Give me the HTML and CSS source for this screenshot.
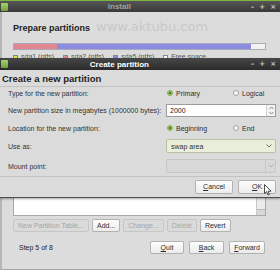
FILE: index.html
```html
<!DOCTYPE html>
<html lang="en">

<head>
  <meta charset="UTF-8" />
  <title>Install</title>
  <link rel="stylesheet" href="styles.css">
</head>

<body>
  <!-- 后面的安装窗口 -->
  <div class="win">
    <div class="titlebar main">
      <span class="logo"></span>
      <span class="title">Install</span>
      <span class="ctrls"><b>–</b><b>+</b><b>×</b></span>
    </div>
    <div class="win-body">
      <div class="head">
        <h1>Prepare partitions</h1>
        <span class="mark">www.aktubu.com</span>
      </div>
      <div class="bar">
        <span class="p-red" style="width:43px"></span>
        <span class="p-blue" style="width:194px"></span>
        <span class="p-free"></span>
      </div>
      <ul class="legend">
        <li><i class="sw yellow"></i>sda1 (ntfs)</li>
        <li><i class="sw red"></i>sda2 (ntfs)</li>
        <li><i class="sw blue"></i>sda5 (ntfs)</li>
        <li><i class="sw white"></i>Free space</li>
      </ul>
      <div class="list">
        <div class="rows"></div>
        <div class="vscroll"><span class="thumb"></span></div>
      </div>
      <div class="tools">
        <button class="btn" disabled>New Partition Table...</button>
        <button class="btn">Add...</button>
        <button class="btn" disabled>Change...</button>
        <button class="btn" disabled>Delete</button>
        <button class="btn">Revert</button>
      </div>
      <div class="foot">
        <span class="step">Step 5 of 8</span>
        <div class="actions">
          <button class="btn w-quit"><u>Q</u>uit</button>
          <button class="btn w-back"><u>B</u>ack</button>
          <button class="btn w-fwd"><u>F</u>orward</button>
        </div>
      </div>
    </div>
  </div>

  <!-- 弹出的对话框 -->
  <div class="dialog">
    <div class="titlebar">
      <span class="logo"></span>
      <span class="title">Create partition</span>
      <span class="ctrls"><b>–</b><b>+</b><b>×</b></span>
    </div>
    <h2>Create a new partition</h2>
    <div class="form">
      <label>Type for the new partition:</label>
      <div class="opts">
        <span class="radio on"><i></i>Primary</span>
        <span class="radio"><i></i>Logical</span>
      </div>

      <label>New partition size in megabytes (1000000 bytes):</label>
      <div class="spin">
        <span class="val">2000</span>
        <span class="arrows">
          <svg width="5" height="9" viewBox="0 0 5 9">
            <path d="M0.5 3 L2.5 1 L4.5 3 M0.5 6 L2.5 8 L4.5 6" fill="none" stroke="#777" stroke-width="0.9" />
          </svg>
        </span>
      </div>

      <label>Location for the new partition:</label>
      <div class="opts">
        <span class="radio on"><i></i>Beginning</span>
        <span class="radio"><i></i>End</span>
      </div>

      <label>Use as:</label>
      <div class="combo swap">
        <span>swap area</span>
        <svg width="6" height="4" viewBox="0 0 6 4">
          <path d="M0.5 0.5 L3 3 L5.5 0.5" fill="none" stroke="#666" stroke-width="0.9" />
        </svg>
      </div>

      <label>Mount point:</label>
      <div class="combo off">
        <span></span>
        <span class="drop">
          <svg width="6" height="4" viewBox="0 0 6 4">
            <path d="M0.5 0.5 L3 3 L5.5 0.5" fill="none" stroke="#aaa" stroke-width="0.9" />
          </svg>
        </span>
      </div>
    </div>
    <div class="dlg-btns">
      <button class="btn w-cancel"><u>C</u>ancel</button>
      <button class="btn w-ok"><u>O</u>K</button>
    </div>
  </div>

  <!-- 鼠标指针 -->
  <svg class="cursor" width="8" height="12" viewBox="0 0 8 12">
    <path d="M0.5 0.5 L0.5 9.5 L2.6 7.6 L4 11 L5.4 10.4 L4 7.2 L7 7.2 Z" fill="#fff" stroke="#222" stroke-width="0.8" />
  </svg>
</body>

</html>
```

FILE: styles.css
```css
* {
  margin: 0;
  padding: 0;
  box-sizing: border-box;
}

ul {
  list-style: none;
}

body {
  width: 280px;
  height: 270px;
  overflow: hidden;
  position: relative;
  background: #d8d8d8;
  color: #2e2e2e;
  font: 7px "Liberation Sans", "DejaVu Sans", sans-serif;
}

/* 标题栏 */
.titlebar {
  height: 12px;
  display: flex;
  align-items: center;
  padding: 0 4px 0 1px;
  background: linear-gradient(#474747, #2b2b2b);
  color: #fff;
}

.titlebar.main {
  border-top: 1px solid #7cb342;
  background: linear-gradient(#555, #3a3a3a);
}

.titlebar .logo {
  width: 7px;
  height: 8px;
  border-radius: 1px;
  background: linear-gradient(#a6d46f, #6f9e3b);
}

.titlebar .title {
  flex: 1;
  text-align: center;
  font: bold 8px "Liberation Sans", sans-serif;
  padding-right: 20px;
}

.titlebar.main .title {
  color: #a0a0a0;
}

.ctrls {
  display: flex;
  gap: 5px;
  color: #c8c8c8;
  font: bold 7px "DejaVu Sans", sans-serif;
}

/* 安装窗口 */
.win {
  height: 270px;
  display: flex;
  flex-direction: column;
}

.win-body {
  flex: 1;
  display: flex;
  flex-direction: column;
  padding: 0 14px 4px 11px;
  border-left: 2px solid #b6b6b6;
  border-bottom: 1px solid #a6a6a6;
  background: #dcdcdc;
}

.head {
  height: 28px;
  display: flex;
  align-items: center;
  gap: 6px;
  padding-top: 3px;
}

.head h1 {
  font: bold 9px "Liberation Sans", sans-serif;
  color: #222;
  white-space: nowrap;
}

.mark {
  font: 13px "DejaVu Sans", sans-serif;
  color: #c8c8c8;
  margin-top: -3px;
  white-space: nowrap;
}

.bar {
  height: 7px;
  margin-top: 3px;
  display: flex;
  border: 1px solid #a9a9b8;
}

.bar span {
  height: 100%;
}

.p-red {
  background: #e0878f;
}

.p-blue {
  background: #8b8ce0;
}

.p-free {
  flex: 1;
  background: #f2f2f2;
}

.legend {
  height: 8px;
  margin-top: 3px;
  display: flex;
  gap: 9px;
  color: #555;
  line-height: 8px;
}

.legend li {
  display: flex;
  align-items: center;
  gap: 3px;
}

.sw {
  width: 5px;
  height: 5px;
  border: 1px solid #888;
}

.sw.yellow {
  background: #e6e04a;
}

.sw.red {
  background: #e0878f;
}

.sw.blue {
  background: #8b8ce0;
}

.sw.white {
  background: #fff;
}

.list {
  flex: 1;
  margin-top: 1px;
  display: flex;
  background: #fff;
  border: 1px solid #a8a8a8;
}

.rows {
  flex: 1;
}

.vscroll {
  width: 9px;
  border-left: 1px solid #c8c8c8;
  background: #ececec;
  display: flex;
  flex-direction: column;
  justify-content: flex-end;
}

.vscroll .thumb {
  height: 6px;
  background: #d8d8d8;
  border-top: 1px solid #bbb;
}

/* 按钮 */
.btn {
  height: 13px;
  padding: 0 4px;
  border: 1px solid #b2b2b2;
  border-radius: 2px;
  background: linear-gradient(#fdfdfd, #ececec);
  color: #2e2e2e;
  font: 7px "Liberation Sans", "DejaVu Sans", sans-serif;
}

.btn:disabled {
  color: #a6a6a6;
  background: #dadada;
  border-color: #c6c6c6;
}

.btn u {
  text-decoration-thickness: 1px;
}

.tools {
  height: 13px;
  margin-top: 3px;
  display: flex;
  gap: 3px;
}

.foot {
  height: 33px;
  display: flex;
  align-items: center;
  padding: 0 1px 2px 6px;
}

.step {
  color: #222;
}

.actions {
  margin-left: auto;
  display: flex;
  gap: 5px;
}

.w-quit {
  width: 34px;
}

.w-back {
  width: 35px;
}

.w-fwd {
  width: 36px;
}

/* 对话框 */
.dialog {
  position: absolute;
  top: 58px;
  left: 0;
  width: 280px;
  height: 140px;
  display: flex;
  flex-direction: column;
  background: #dbdbdb;
  border-bottom: 1px solid #4e4e4e;
  box-shadow: 0 1px 2px rgba(0, 0, 0, 0.35);
}

.dialog h2 {
  height: 17px;
  padding: 3px 0 0 2px;
  font: bold 9.5px "Liberation Sans", sans-serif;
  color: #1e1e1e;
  border-bottom: 1px solid #c2c2c2;
}

.form {
  display: grid;
  grid-template-columns: 166px 1fr;
  grid-template-rows: 12px 22px 14px 22px 18px;
  align-items: center;
  padding-right: 4px;
  border-bottom: 1px solid #c2c2c2;
  padding-bottom: 1px;
}

.form label {
  padding-left: 8px;
  color: #333;
}

.opts {
  display: flex;
}

.radio {
  display: flex;
  align-items: center;
  gap: 3px;
  padding-left: 1px;
}

.radio:first-child {
  width: 66px;
}

.radio i {
  width: 6px;
  height: 6px;
  border-radius: 50%;
  border: 1px solid #a4a4a4;
  background: #f6f6f6;
}

.radio.on i {
  border: 1px solid #86ad52;
  background: radial-gradient(#4b7424 40%, #9cc467 45%);
}

.spin {
  height: 13px;
  display: flex;
  border: 1px solid #9c9c9c;
  background: #fff;
}

.spin .val {
  flex: 1;
  padding-left: 3px;
  line-height: 11px;
  color: #222;
}

.spin .arrows {
  width: 9px;
  display: flex;
  align-items: center;
  justify-content: center;
  border-left: 1px solid #d0d0d0;
  background: #f4f4f4;
}

.combo {
  height: 14px;
  display: flex;
  align-items: center;
  justify-content: space-between;
  border-radius: 2px;
}

.combo.swap {
  padding: 0 3px 0 4px;
  background: #e9efda;
  border: 1px solid #b8c2a4;
  color: #333;
}

.combo.off {
  background: #d8d8d8;
  border: 1px solid #c6c6c6;
}

.combo .drop {
  width: 10px;
  height: 100%;
  display: flex;
  align-items: center;
  justify-content: center;
  border-left: 1px solid #c6c6c6;
}

.dlg-btns {
  flex: 1;
  display: flex;
  justify-content: flex-end;
  align-items: center;
  gap: 5px;
  padding: 0 4px 1px 0;
}

.w-cancel {
  width: 38px;
  height: 14px;
}

.w-ok {
  width: 38px;
  height: 14px;
}

.cursor {
  position: absolute;
  left: 264px;
  top: 184px;
}
```
